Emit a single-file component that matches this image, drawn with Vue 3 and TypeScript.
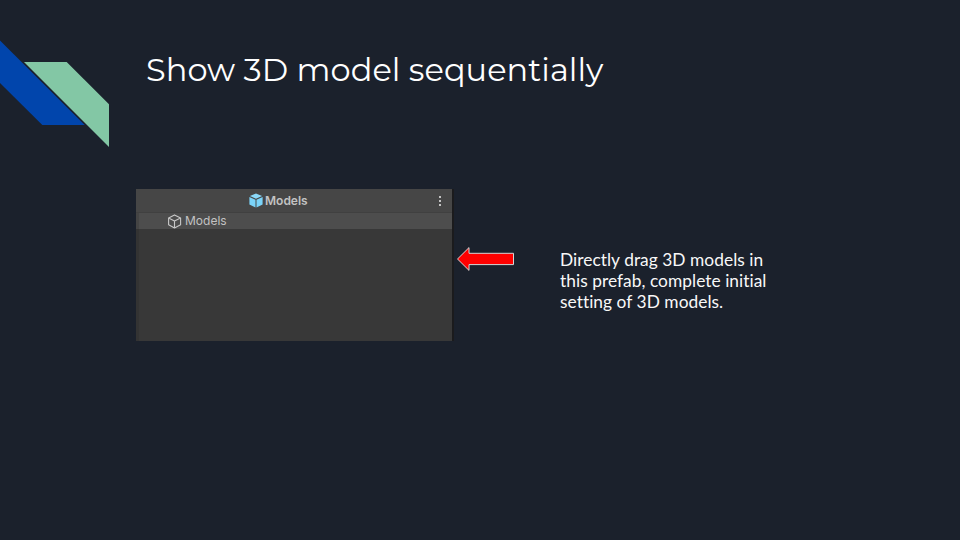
<script setup lang="ts">
const title = 'Show 3D model sequentially'
const note: string[] = ['Directly drag 3D models in', 'this prefab, complete initial', 'setting of 3D models.']
</script>

<template>
  <main class="slide">
    <svg class="ribbon" width="110" height="110" viewBox="0 0 110 110" aria-hidden="true">
      <path d="M0 0.5L84.7 85H42.3L0 43Z" fill="#0145ac" />
      <path d="M24 22H66.7L109 64.3V107Z" fill="#83c7a5" />
    </svg>
    <h1 class="title">{{ title }}</h1>
    <div class="content">
      <section class="panel">
        <header class="panel-head">
          <svg class="prefab" width="14" height="15" viewBox="0 0 14 15">
            <path d="M7 0.4L13.1 3L7 5.8L0.9 3Z" fill="#8bd9f9" />
            <path d="M0.4 4L6.5 6.7V14.5L0.4 11.4Z" fill="#7bd3f8" />
            <path d="M13.6 4L7.5 6.7V14.5L13.6 11.4Z" fill="#7bd3f8" />
          </svg>
          <span class="head-label">Models</span>
          <span class="menu"><i /><i /><i /></span>
        </header>
        <div class="panel-row">
          <svg width="14" height="15" viewBox="0 0 14 15" fill="none" stroke="#c8c8c8" stroke-width="1.1" stroke-linejoin="round">
            <path d="M6.5 0.9L12.6 4V10.8L6.5 14L0.6 10.8V4ZM0.6 4L6.5 7L12.6 4M6.5 7V14" />
          </svg>
          <span class="row-label">Models</span>
        </div>
      </section>
      <svg class="arrow" width="58" height="26" viewBox="0 0 58 26">
        <path d="M0.5 13L12 1.6V7.3H56.5V18.6H12V24.4Z" fill="#ff0000" stroke="#d5d5d5" stroke-width="1" />
      </svg>
      <p class="note">
        <span v-for="line in note" :key="line">{{ line }}</span>
      </p>
    </div>
  </main>
</template>

<style>
body {
  margin: 0;
  background: #1b212c;
}
</style>

<style scoped>
.slide {
  position: relative;
  box-sizing: border-box;
  width: 960px;
  height: 540px;
  padding: 48px 0 0 136px;
  overflow: hidden;
  background: #1b212c;
}
.ribbon {
  position: absolute;
  top: 40px;
  left: 0;
}
.title {
  height: 44px;
  margin: 0;
  padding-left: 10px;
  color: #fff;
  font: 400 32px/44px Montserrat, Inter, sans-serif;
  letter-spacing: 0.04px;
  white-space: nowrap;
}
.content {
  display: flex;
  align-items: flex-start;
  margin-top: 97px;
}
.panel {
  box-sizing: border-box;
  width: 318px;
  height: 152px;
  border-right: 2px solid #1b1b1d;
  background: linear-gradient(to right, #333 3px, #383838 3px);
  color: #c2c2c2;
  font: 12px/16px Inter, sans-serif;
}
.panel-head {
  display: flex;
  align-items: center;
  box-sizing: border-box;
  height: 24px;
  padding: 0 11px 0 112.5px;
  border-bottom: 1px solid #404040;
  background: #464646;
}
.head-label {
  margin-left: 2.5px;
  font-weight: 600;
}
.menu {
  display: flex;
  flex-direction: column;
  gap: 2px;
  margin-left: auto;
}
.menu i {
  width: 2px;
  height: 2px;
  background: #c4c4c4;
}
.panel-row {
  display: flex;
  align-items: center;
  height: 16px;
  padding-left: 32px;
  background: linear-gradient(to right, #444 3px, #4d4d4d 3px);
}
.row-label {
  margin-left: 3px;
}
.arrow {
  margin: 57px 0 0 3px;
}
.note {
  display: flex;
  flex-direction: column;
  align-items: flex-start;
  margin: 60px 0 0 45px;
  color: #f8f8f8;
  font: 17.33px/21px Lato, sans-serif;
  font-variant-ligatures: none;
  letter-spacing: 0.04px;
  white-space: nowrap;
}
</style>
